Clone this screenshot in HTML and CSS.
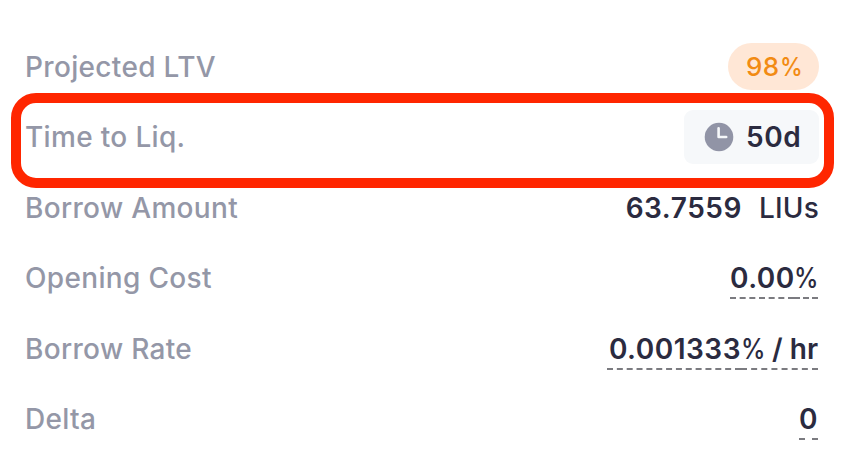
FILE: index.html
```html
<!DOCTYPE html>
<html lang="en">
<head>
<meta charset="utf-8">
<title>Loan details</title>
<link rel="stylesheet" href="styles.css">
</head>
<body>
<main class="details">
  <div class="row"><span class="label">Projected LTV</span><span class="pill">98<span class="percent">%</span></span></div>
  <div class="row row-time"><span class="label">Time to Liq.</span><span class="chip"><svg class="clock" viewBox="0 0 30 30"><circle cx="15" cy="15" r="14.3" fill="#9194a6"/><path d="M14.6 6.2v8.8h7.6" fill="none" stroke="#f6f8fa" stroke-width="2.6" stroke-linecap="round" stroke-linejoin="round"/></svg><span class="days">50d</span></span><div class="highlight"></div></div>
  <div class="row"><span class="label">Borrow Amount</span><span class="value"><span class="amount">63.7559</span><span class="unit">LIUs</span></span></div>
  <div class="row"><span class="label">Opening Cost</span><span class="value underlined"><span class="dashed cost">0.00</span><span class="dashed suffix"><span class="percent">%</span></span></span></div>
  <div class="row"><span class="label">Borrow Rate</span><span class="value underlined"><span class="dashed rate">0.001333</span><span class="dashed per-hour"><span class="percent">%</span> / hr</span></span></div>
  <div class="row"><span class="label">Delta</span><span class="value underlined"><span class="dashed delta">0</span></span></div>
</main>
</body>
</html>
```
FILE: styles.css
```css
* { box-sizing: border-box; }
body { margin: 0; background: #fff; font-family: Inter, sans-serif; font-size: 28px; color: #2b2b40; }
.details { padding: 31.6px 37px 0 25px; height: 472px; overflow: hidden; }
.row { position: relative; display: flex; align-items: center; justify-content: space-between; height: 70.45px; white-space: nowrap; }
.label { color: #9497a7; font-weight: 450; letter-spacing: 0.33px; }
.value { display: flex; font-weight: 600; }
.underlined { margin-right: 1px; }
.percent { display: inline-block; font-weight: 500; transform: scaleX(0.88); transform-origin: left; margin-right: -3px; }
.pill { width: 91px; height: 47px; border-radius: 24px; background: #ffe7d6; color: #f28b13; font-weight: 450; font-size: 26px; letter-spacing: 0.5px; display: flex; align-items: center; justify-content: center; padding-left: 2px; }
.pill .percent { font-weight: 450; }
.chip { width: 135px; height: 54px; border-radius: 9px; background: #f6f8fa; display: flex; align-items: center; padding-left: 20px; gap: 12px; font-weight: 600; letter-spacing: 0.6px; }
.clock { width: 30px; height: 30px; }
.highlight { position: absolute; left: -14px; right: -15px; top: -9px; height: 95px; border: 10px solid #ff2600; border-radius: 25px; }
.amount { letter-spacing: 0.55px; }
.unit { font-weight: 450; margin-left: 17px; letter-spacing: 0.2px; }
.dashed { height: 38px; line-height: 34px; margin-top: 4px; border-bottom: 2px dashed #7b7b80; text-align: right; letter-spacing: 0.5px; }
.cost { width: 64px; }
.suffix { width: 24px; }
.rate { width: 134px; }
.per-hour { width: 77px; letter-spacing: 0; }
.per-hour .percent { margin-right: -4px; }
.delta { width: 19px; }
```
